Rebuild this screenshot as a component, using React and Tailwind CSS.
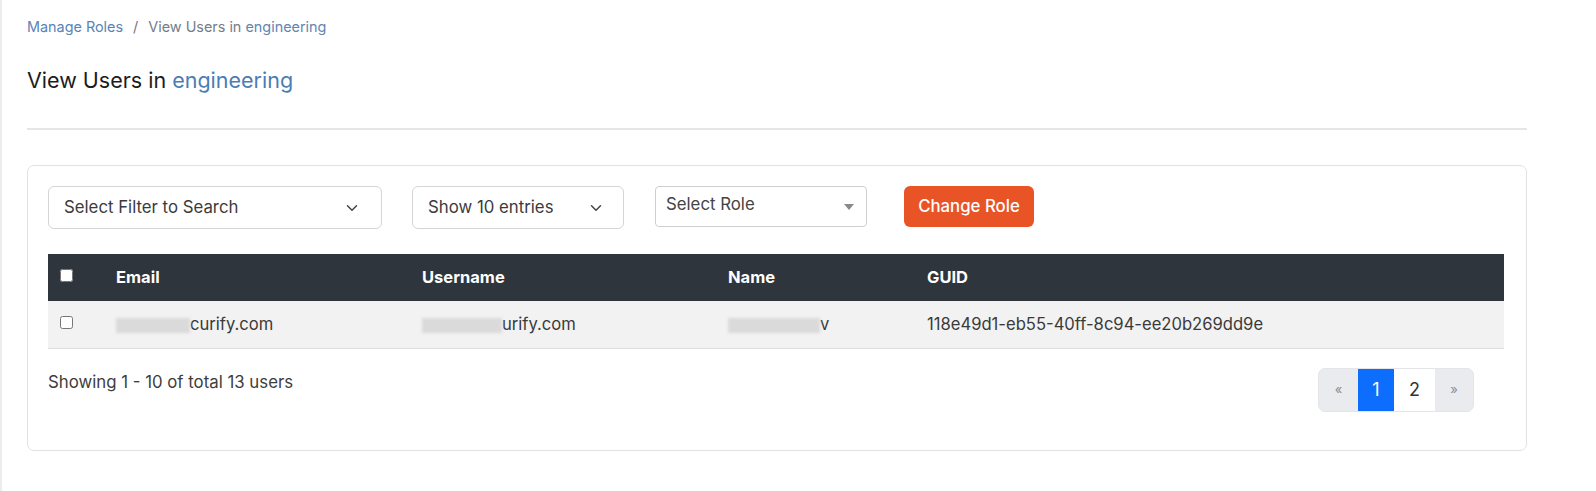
import { ChevronDown } from "lucide-react";

const users = [
  {
    id: "118e49d1-eb55-40ff-8c94-ee20b269dd9e",
    emailTail: "curify.com",
    userTail: "urify.com",
  },
];

function Blur({ w }) {
  return <span className={`inline-block align-middle h-[15px] bg-[#dadada] blur-[1.5px] ${w}`} />;
}

export default function App() {
  return (
    <div className="min-h-[491px] w-[1596px] bg-white border-l-2 border-[#ececec] font-['Inter',sans-serif] text-[#333]">
      <div className="pl-[25px] w-[1525px] pt-[17px]">
        {/* breadcrumb */}
        <nav className="flex items-center text-[14.4px] leading-5">
          <a className="text-[#5a84b6]">Manage Roles</a>
          <span className="mx-[10px] text-[#777]">/</span>
          <span className="text-[#757c87]">
            View Users in <span className="text-[#5f86b3]">engineering</span>
          </span>
        </nav>

        <h1 className="mt-[29px] text-[21.5px] leading-7 text-[#1c1c1c]">
          View Users in <span className="text-[#4b7db3]">engineering</span>
        </h1>

        <hr className="mt-[34px] border-0 border-t-2 border-[#e6e6e6]" />

        {/* card */}
        <div className="mt-[35px] border border-[#e2e2e2] rounded-[7px] px-[20px] pt-[20px] pb-[38px]">
          <div className="flex items-start text-[16.8px]">
            <button className="w-[334px] h-[43px] border border-[#d5d5d5] rounded-[6px] flex items-center justify-between pl-[15px] pr-[20px] text-[#3b3b3b]">
              Select Filter to Search
              <ChevronDown size={18} strokeWidth={2} className="text-[#444]" />
            </button>
            <button className="ml-[30px] w-[212px] h-[43px] border border-[#d5d5d5] rounded-[6px] flex items-center justify-between pl-[15px] pr-[18px] text-[#3b3b3b]">
              Show 10 entries
              <ChevronDown size={18} strokeWidth={2} className="text-[#444]" />
            </button>
            <button className="ml-[31px] w-[212px] h-[41px] border border-[#cfcfcf] rounded-[4px] flex items-center justify-between pl-[10px] pr-[12px] text-[#444]">
              <span className="-mt-[3px]">Select Role</span>
              <span className="w-0 h-0 border-l-[5px] border-r-[5px] border-t-[6px] border-l-transparent border-r-transparent border-t-[#8a8a8a]" />
            </button>
            <button className="ml-[37px] w-[130px] h-[41px] rounded-[6px] bg-[#e95426] text-white font-medium">
              Change Role
            </button>
          </div>

          <table className="mt-[25px] w-[1456px] table-fixed border-collapse text-left">
            <thead>
              <tr className="bg-[#2f353c] text-white h-[47px] text-[16.5px] font-bold">
                <th className="w-[56px] pl-[12px]">
                  <input type="checkbox" className="block w-[13px] h-[13px] -mt-[4px] accent-white" />
                </th>
                <th className="w-[306px] pl-[12px]">Email</th>
                <th className="w-[306px] pl-[12px]">Username</th>
                <th className="w-[199px] pl-[12px]">Name</th>
                <th className="pl-[12px]">GUID</th>
              </tr>
            </thead>
            <tbody>
              {users.map((u) => (
                <tr key={u.id} className="bg-[#f2f2f2] h-[47px] text-[16.6px] text-[#3a3a3a] border-b border-[#dedede]">
                  <td className="pl-[12px]">
                    <input type="checkbox" className="block w-[13px] h-[13px] -mt-[4px]" />
                  </td>
                  <td className="pl-[12px]">
                    <Blur w="w-[74px]" />
                    {u.emailTail}
                  </td>
                  <td className="pl-[12px]">
                    <Blur w="w-[80px]" />
                    {u.userTail}
                  </td>
                  <td className="pl-[12px]">
                    <Blur w="w-[92px]" />v
                  </td>
                  <td className="pl-[12px]">{u.id}</td>
                </tr>
              ))}
            </tbody>
          </table>

          <div className="mt-[19px] flex items-start justify-between w-[1456px]">
            <p className="mt-[2px] text-[16.8px] text-[#3d3d3d]">Showing 1 - 10 of total 13 users</p>
            <div className="mr-[30px] flex h-[44px] rounded-[7px] overflow-hidden bg-[#e9ebee] border border-[#e3e5e8] text-[18px]">
              <span className="w-[39px] flex items-center justify-center text-[13px] text-[#8a8f96]">«</span>
              <span className="w-[36px] flex items-center justify-center bg-[#0d6efd] text-white">1</span>
              <span className="w-[41px] flex items-center justify-center bg-white text-[#333]">2</span>
              <span className="w-[38px] flex items-center justify-center text-[13px] text-[#8a8f96]">»</span>
            </div>
          </div>
        </div>
      </div>
    </div>
  );
}
